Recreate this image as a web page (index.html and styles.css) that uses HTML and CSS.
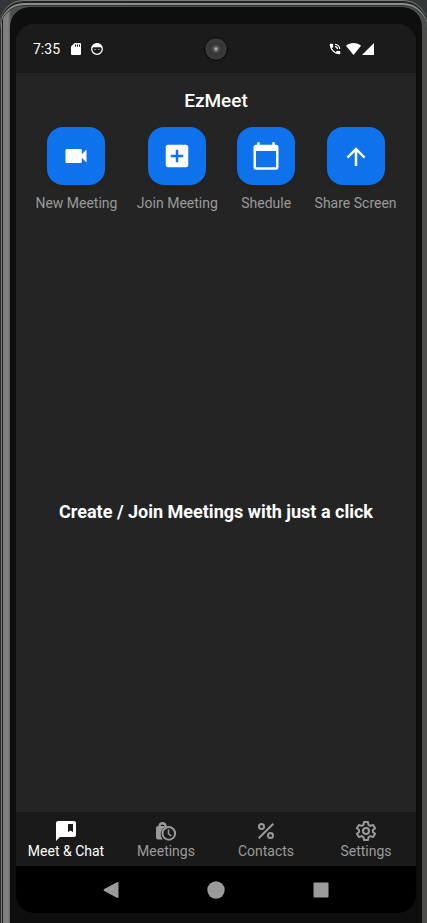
FILE: index.html
```html
<!DOCTYPE html>
<html lang="en">
<head>
<meta charset="utf-8">
<meta name="viewport" content="width=device-width, initial-scale=1">
<title>EzMeet</title>
<link rel="stylesheet" href="styles.css">
</head>
<body>
<div class="phone">
  <div class="bezel">
    <div class="screen">
      <div class="status">
        <span class="clock">7:35</span>
        <svg class="sd" width="10" height="12" viewBox="0 0 10 12"><path fill="#fff" fill-rule="evenodd" d="M3.6 0H9a1 1 0 0 1 1 1v10a1 1 0 0 1-1 1H1a1 1 0 0 1-1-1V3.6zM4 1.6v2.2h1V1.6zm2 0v2.2h1V1.6zm2 0v2.2h1V1.6z"/></svg>
        <svg class="face" width="12" height="12" viewBox="0 0 12 12"><circle cx="6" cy="6" r="5.3" fill="none" stroke="#fff" stroke-width="1.3"/><path fill="#fff" d="M.8 5.2C1.6 1.8 3.5.6 6 .6s4.400 1.200 5.200 4.600L9.500 4.300H2.500z"/><path fill="#ccc" d="M3.500 6h1.200v1H3.500zm3.800 0h1.200v1H7.300z"/></svg>
        <span class="camera"></span>
        <div class="signals">
          <svg class="call" width="14" height="14" viewBox="0 0 24 24"><path fill="#fff" d="M20 15.500c-1.250 0-2.450-.2-3.570-.57a1 1 0 0 0-1.020.24l-2.200 2.200a15.070 15.070 0 0 1-6.590-6.590l2.200-2.200a1 1 0 0 0 .25-1.010A11.400 11.400 0 0 1 8.500 4a1 1 0 0 0-1-1H4a1 1 0 0 0-1 1c0 9.390 7.610 17 17 17a1 1 0 0 0 1-1v-3.500a1 1 0 0 0-1-1z"/><path fill="none" stroke="#fff" stroke-width="2.200" d="M12 4a8 8 0 0 1 8 8M12 8a4 4 0 0 1 4 4"/></svg>
          <svg width="15" height="12" viewBox="0 0 15 12"><path fill="#fff" d="M7.500 12 0 2.800C2 1 4.600 0 7.500 0S13 1 15 2.800z"/></svg>
          <svg width="12" height="12" viewBox="0 0 12 12"><path fill="#fff" d="M12 0v12H0z"/></svg>
        </div>
      </div>

      <header class="titlebar"><h1>EzMeet</h1></header>

      <main>
        <div class="actions">
          <button class="action">
            <span class="tile"><svg width="28" height="28" viewBox="0 0 24 24"><path fill="#fff" d="M17 10.500V7a1 1 0 0 0-1-1H4a1 1 0 0 0-1 1v10a1 1 0 0 0 1 1h12a1 1 0 0 0 1-1v-3.500l4 4v-11z"/></svg></span>
            <span>New Meeting</span>
          </button>
          <button class="action">
            <span class="tile"><svg width="30" height="30" viewBox="0 0 24 24"><path fill="#fff" fill-rule="evenodd" d="M19 3H5a2 2 0 0 0-2 2v14a2 2 0 0 0 2 2h14a2 2 0 0 0 2-2V5a2 2 0 0 0-2-2zm-2 10h-4v4h-2v-4H7v-2h4V7h2v4h4z"/></svg></span>
            <span>Join Meeting</span>
          </button>
          <button class="action">
            <span class="tile"><svg width="30" height="30" viewBox="0 0 24 24"><path fill="#fff" d="M20 3h-1V1h-2v2H7V1H5v2H4a2 2 0 0 0-2 2v16a2 2 0 0 0 2 2h16a2 2 0 0 0 2-2V5a2 2 0 0 0-2-2zm0 18H4V8h16z"/></svg></span>
            <span>Shedule</span>
          </button>
          <button class="action">
            <span class="tile"><svg width="30" height="30" viewBox="0 0 24 24"><path fill="#fff" d="m4.500 12.500 1.400 1.400L11 8.800V20h2V8.800l5.100 5.100 1.400-1.400L12 5z"/></svg></span>
            <span>Share Screen</span>
          </button>
        </div>
        <p class="message">Create / Join Meetings with just a click</p>
      </main>

      <nav class="tabs">
        <a class="tab current" href="#"><svg width="24" height="24" viewBox="0 0 24 24"><path fill="currentColor" fill-rule="evenodd" d="M20 2H4a2 2 0 0 0-2 2v18l4-4h14a2 2 0 0 0 2-2V4a2 2 0 0 0-2-2zm-1 11-2.500-1.500L14 13V5h5z"/></svg><span>Meet &amp; Chat</span></a>
        <a class="tab" href="#"><svg width="24" height="24" viewBox="0 0 24 24"><path fill="currentColor" d="M8.700 20.500H4a2 2 0 0 1-2-2V9a2 2 0 0 1 2-2h.5a4.100 4.100 0 0 1 8-1.100l.8 1.600-2 .5a8 8 0 0 0-2.600 12.500z"/><path fill="#1a1a1a" d="M6.400 7h4.200a2.200 2.200 0 0 0-4.200 0z"/><circle cx="14.800" cy="14.400" r="6.300" fill="none" stroke="currentColor" stroke-width="2"/><path fill="none" stroke="currentColor" stroke-width="1.500" d="M14.500 10.500v4.300l2.800 2"/></svg><span>Meetings</span></a>
        <a class="tab" href="#"><svg width="24" height="24" viewBox="0 0 24 24"><g fill="none" stroke="currentColor" stroke-width="2"><circle cx="7.500" cy="7.500" r="2.500"/><circle cx="16.500" cy="16.500" r="2.500"/><path d="M4.700 19.300 19.300 4.700"/></g></svg><span>Contacts</span></a>
        <a class="tab" href="#"><svg width="24" height="24" viewBox="0 0 24 24"><g fill="none" stroke="currentColor" stroke-width="2" stroke-linejoin="round"><path d="M10 3h4l.5 2.800 1.900 1.100 2.700-1 2 3.400L18.900 11v2l2.200 1.700-2 3.400-2.700-1-1.900 1.100L14 21h-4l-.5-2.800-1.900-1.100-2.700 1-2-3.400L5.100 13v-2L2.900 9.300l2-3.400 2.700 1 1.900-1.100z"/><circle cx="12" cy="12" r="3"/></g></svg><span>Settings</span></a>
      </nav>

      <div class="system">
        <button aria-label="Back"><svg width="18" height="18" viewBox="0 0 18 18"><path fill="#9b9b9b" d="M15 1.200Q16.500.6 16.500 2v14q0 1.400-1.500.8L2.200 9.900q-1.400-.9 0-1.800z"/></svg></button>
        <button aria-label="Home"><svg width="18" height="18" viewBox="0 0 18 18"><circle cx="9" cy="9" r="8.700" fill="#9b9b9b"/></svg></button>
        <button aria-label="Recent apps"><svg width="18" height="18" viewBox="0 0 18 18"><rect x="1.500" y="1.500" width="15" height="15" rx="1" fill="#9b9b9b"/></svg></button>
      </div>
    </div>
  </div>
</div>
</body>
</html>
```
FILE: styles.css
```css
* { box-sizing: border-box; }

body {
  margin: 0;
  background: #34373a;
  font: 14px/16px Roboto, sans-serif;
  color: #9a9a9a;
}

h1, p { margin: 0; }

svg { display: block; }

button {
  padding: 0;
  border: 0;
  background: none;
  color: inherit;
  font: inherit;
}

.phone {
  display: flex;
  min-height: 100vh;
  padding: 7px 5px 0 10px;
  border-radius: 24px 24px 0 0;
  background: linear-gradient(to right, #2c2c2c 1px, #777 1px, #777 2px, #222 2px, #222 3px, #7c7c7c 3px, #828282 8px, #505050 11px, #4d4d4b 50%);
  box-shadow: inset 0 1px #777c78, inset 0 3px #202221, inset 0 5px #8a8e8b, inset 0 6px #303231;
}

.bezel {
  flex: 1;
  display: flex;
  padding: 17px 6px 10px;
  border-radius: 20px 20px 0 0;
  background: #0e0e0e;
}

.screen {
  flex: 1;
  display: flex;
  flex-direction: column;
  overflow: hidden;
  border-radius: 18px;
  background: #242424;
}

.status {
  position: relative;
  display: flex;
  align-items: center;
  height: 49px;
  padding: 0 42px 0 17px;
  background: #1b1b1b;
  color: #fff;
}

.clock { margin-right: 11px; }

.sd { margin-right: 10px; }

.camera {
  position: absolute;
  top: 50%;
  left: 50%;
  width: 24px;
  height: 24px;
  border: 1px solid #080808;
  border-radius: 50%;
  background: radial-gradient(circle, #aaa 1px, #606068 2px, #343434 5px, #3b3b3b 9px, #303030 12px);
  transform: translate(-50%, -50%);
}

.signals {
  display: flex;
  align-items: center;
  gap: 1px;
  margin-left: auto;
}

.call { margin-right: 3px; }

.titlebar {
  padding: 16px 0 14px;
  text-align: center;
}

h1 {
  color: #fff;
  font-size: 19px;
  font-weight: 500;
  line-height: 24px;
}

main {
  flex: 1;
  display: flex;
  flex-direction: column;
}

.actions {
  display: flex;
  justify-content: space-evenly;
}

.action {
  display: flex;
  flex-direction: column;
  align-items: center;
  gap: 10px;
}

.tile {
  display: grid;
  place-items: center;
  width: 58px;
  height: 58px;
  border-radius: 16px;
  background: #0e72ed;
  box-shadow: 0 3px 4px rgba(0, 0, 0, 0.08);
}

.message {
  margin: auto 0;
  color: #fff;
  font-size: 18px;
  font-weight: 700;
  line-height: 24px;
  text-align: center;
}

.tabs {
  display: grid;
  grid-template-columns: repeat(4, 1fr);
  height: 54px;
  padding-top: 7px;
  background: #1a1a1a;
}

.tab {
  display: flex;
  flex-direction: column;
  align-items: center;
  color: #9a9a9a;
  text-decoration: none;
}

.current { color: #fff; }

.system {
  display: grid;
  grid-template-columns: repeat(3, 1fr);
  justify-items: center;
  height: 47px;
  padding: 0 43px;
  background: #000;
}
```
